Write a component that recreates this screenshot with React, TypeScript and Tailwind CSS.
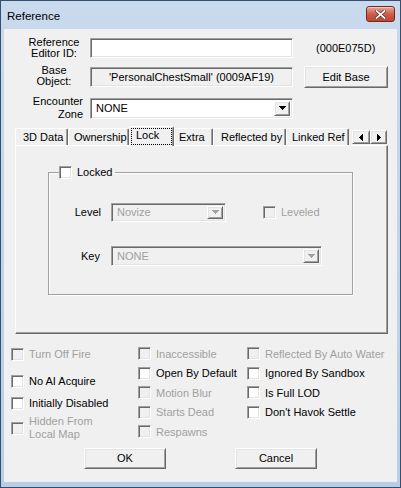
const sunken =
  "border border-t-[#a0a0a0] border-l-[#a0a0a0] border-r-white border-b-white shadow-[inset_1px_1px_0_#696969,inset_-1px_-1px_0_#e3e3e3]";
const raised =
  "border border-t-white border-l-white border-r-[#696969] border-b-[#696969] shadow-[inset_1px_1px_0_#e3e3e3,inset_-1px_-1px_0_#a0a0a0]";

function Tri({ color }: { color: string }) {
  return (
    <svg width="7" height="4" viewBox="0 0 7 4" shapeRendering="crispEdges">
      <path d="M0 0h7v1H0z M1 1h5v1H1z M2 2h3v1H2z M3 3h1v1H3z" fill={color} />
    </svg>
  );
}

function Box({ disabled }: { disabled?: boolean }) {
  return (
    <span
      className={`block w-[13px] h-[13px] shrink-0 ${sunken} ${disabled ? "bg-[#f0f0f0]" : "bg-white"}`}
    />
  );
}

function Check({ label, disabled, className }: { label: React.ReactNode; disabled?: boolean; className: string }) {
  return (
    <div className={`flex items-center ${className}`}>
      <Box disabled={disabled} />
      <span className={`ml-[5px] ${disabled ? "text-[#a0a0a0]" : "text-black"}`}>{label}</span>
    </div>
  );
}

function Combo({ text, disabled, className }: { text: string; disabled?: boolean; className: string }) {
  return (
    <div
      className={`flex items-center ${sunken} ${disabled ? "bg-[#f0f0f0] text-[#a0a0a0]" : "bg-white text-black"} ${className}`}
    >
      <span className="flex-1 pl-[5px] whitespace-nowrap">{text}</span>
      <div className={`w-[16px] h-[calc(100%-4px)] mr-[2px] flex items-center justify-center bg-[#f0f0f0] ${raised}`}>
        <Tri color={disabled ? "#a0a0a0" : "#000"} />
      </div>
    </div>
  );
}

function Tab({ label, className }: { label: string; className: string }) {
  return (
    <div
      className={`h-[17px] flex items-center shrink-0 bg-[#f0f0f0] border-t border-l border-r border-t-white border-l-white border-r-[#696969] rounded-t-[2px] shadow-[inset_-1px_0_0_#a0a0a0] whitespace-nowrap ${className}`}
    >
      {label}
    </div>
  );
}

export default function App() {
  return (
    <div className="w-[401px] h-[488px] flex flex-col border border-[#34506e] bg-gradient-to-b from-[#c9daee] to-[#b8cee8] font-['Liberation_Sans',Arial,sans-serif] text-[11px] text-black">
      {/* title bar */}
      <div className="h-[28px] flex justify-between pl-[6px] pr-[5px]">
        <span className="mt-[7px] text-[11.5px]">Reference</span>
        <div className="mt-[5px] w-[29px] h-[16px] flex items-center justify-center rounded-[3px] border border-[#6e2b21] bg-gradient-to-b from-[#e6a798] via-[#cf5d48] to-[#c0452f] shadow-[inset_0_1px_0_#f3c9bf]">
          <svg width="11" height="9" viewBox="0 0 11 9">
            <path d="M1.5 1l8 7M9.5 1l-8 7" stroke="#5a1a12" strokeWidth="3" strokeLinecap="square" />
            <path d="M1.5 1l8 7M9.5 1l-8 7" stroke="#fff" strokeWidth="1.8" strokeLinecap="square" />
          </svg>
        </div>
      </div>

      {/* client area */}
      <div className="mx-[3px] h-[453px] bg-[#f0f0f0] flex flex-col">
        <div className="mt-[7px] h-[24px] flex items-center">
          <div className="ml-[16px] w-[68px] text-center leading-[11px]">
            Reference
            <br />
            Editor ID:
          </div>
          <div className={`ml-[2px] w-[203px] h-[20px] bg-white ${sunken}`} />
          <span className="ml-[23px]">(000E075D)</span>
        </div>

        <div className="mt-[5px] h-[24px] flex items-center">
          <div className="ml-[16px] w-[68px] text-center leading-[11px] pb-[2px]">
            Base
            <br />
            Object:
          </div>
          <div className={`ml-[2px] w-[203px] h-[20px] flex items-center justify-center bg-[#f0f0f0] ${sunken}`}>
            'PersonalChestSmall' (0009AF19)
          </div>
          <div className={`ml-[11px] w-[84px] h-[22px] flex items-center justify-center ${raised}`}>Edit Base</div>
        </div>

        <div className="mt-[7px] h-[24px] flex items-center">
          <div className="ml-[16px] w-[68px] text-right pr-[5px] leading-[13px]">
            Encounter
            <br />
            Zone
          </div>
          <Combo text="NONE" className="ml-[2px] w-[203px] h-[21px]" />
        </div>

        {/* tabs */}
        <div className="mt-[6px] ml-[11px] h-[19px] flex items-end">
          <Tab label="3D Data" className="w-[53px] pl-[7px]" />
          <Tab label="Ownership" className="w-[61px] pl-[5px]" />
          <div className="relative z-10 -mb-[1px] h-[20px] w-[45px] shrink-0 p-[1px] bg-[#f0f0f0] border-t border-l border-r border-t-white border-l-white border-r-[#696969] rounded-t-[2px] shadow-[inset_-1px_0_0_#a0a0a0]">
            <div className="h-full border border-dotted border-black flex items-center pl-[4px] pb-[2px]">Lock</div>
          </div>
          <Tab label="Extra" className="w-[39px] pl-[4px]" />
          <Tab label="Reflected by" className="w-[73px] pl-[7px]" />
          <Tab label="Linked Ref" className="w-[63px] pl-[5px]" />
          <div className="ml-[3px] mb-[1px] flex">
            <div className={`w-[18px] h-[14px] flex items-center justify-center ${raised}`}>
              <svg width="4" height="7" viewBox="0 0 4 7" shapeRendering="crispEdges">
                <path d="M3 0h1v7H3z M2 1h1v5H2z M1 2h1v3H1z M0 3h1v1H0z" fill="#000" />
              </svg>
            </div>
            <div className={`w-[17px] h-[14px] flex items-center justify-center ${raised}`}>
              <svg width="4" height="7" viewBox="0 0 4 7" shapeRendering="crispEdges">
                <path d="M0 0h1v7H0z M1 1h1v5H1z M2 2h1v3H2z M3 3h1v1H3z" fill="#000" />
              </svg>
            </div>
          </div>
        </div>

        {/* tab panel */}
        <div className="ml-[11px] w-[373px] h-[189px] border border-t-white border-l-white border-r-[#696969] border-b-[#696969] shadow-[inset_-1px_-1px_0_#a0a0a0]">
          <div className="relative ml-[32px] mt-[26px] w-[305px] h-[123px] border border-[#a0a0a0] shadow-[inset_1px_1px_0_#fff,1px_1px_0_#fff]">
            <div className="absolute left-[10px] -top-[7px] h-[13px] flex items-center bg-[#f0f0f0] pr-[3px]">
              <Box />
              <span className="ml-[5px]">Locked</span>
            </div>
            <div className="mt-[29px] h-[20px] flex items-center">
              <div className="w-[52px] text-right">Level</div>
              <Combo text="Novize" disabled className="ml-[10px] w-[115px] h-[19px]" />
              <Check label="Leveled" disabled className="ml-[37px]" />
            </div>
            <div className="mt-[24px] h-[20px] flex items-center">
              <div className="w-[51px] text-right">Key</div>
              <Combo text="NONE" disabled className="ml-[11px] w-[211px] h-[20px]" />
            </div>
          </div>
        </div>

        {/* flags */}
        <div className="mt-[10px] h-[98px] pl-[7px] flex">
          <div className="w-[127px] flex flex-col">
            <Check label="Turn Off Fire" disabled className="h-[21px]" />
            <Check label="No AI Acquire" className="mt-[6px] h-[20px]" />
            <Check label="Initially Disabled" className="mt-[2px] h-[20px]" />
            <Check
              label={
                <span className="block leading-[13px]">
                  Hidden From
                  <br />
                  Local Map
                </span>
              }
              disabled
              className="mt-[2px] h-[26px]"
            />
          </div>
          <div className="w-[109px] flex flex-col">
            <Check label="Inaccessible" disabled className="h-[19.5px]" />
            <Check label="Open By Default" className="h-[19.5px]" />
            <Check label="Motion Blur" disabled className="h-[19.5px]" />
            <Check label="Starts Dead" disabled className="h-[19.5px]" />
            <Check label="Respawns" disabled className="h-[19.5px]" />
          </div>
          <div className="flex flex-col">
            <Check label="Reflected By Auto Water" disabled className="h-[19.5px]" />
            <Check label="Ignored By Sandbox" className="h-[19.5px]" />
            <Check label="Is Full LOD" className="h-[19.5px]" />
            <Check label="Don't Havok Settle" className="h-[19.5px]" />
          </div>
        </div>

        <div className="mt-[6px] flex">
          <div className={`ml-[80px] w-[82px] h-[21px] flex items-center justify-center ${raised}`}>OK</div>
          <div className={`ml-[69px] w-[82px] h-[21px] flex items-center justify-center ${raised}`}>Cancel</div>
        </div>
      </div>
    </div>
  );
}
